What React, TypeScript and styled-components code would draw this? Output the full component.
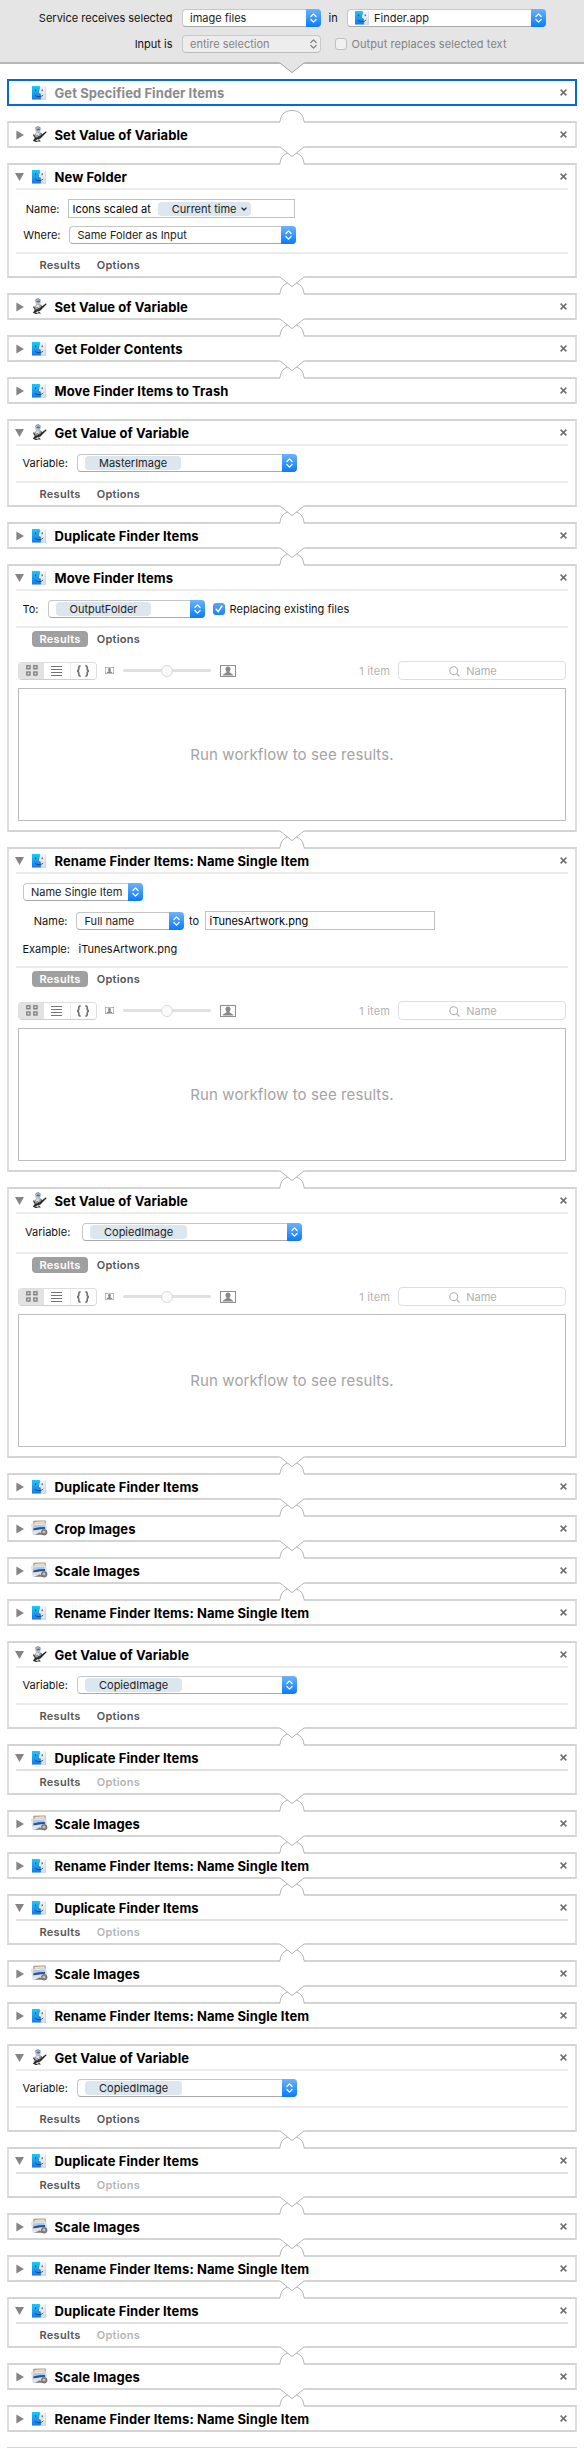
import React from 'react';
import styled, { createGlobalStyle } from 'styled-components';

const GlobalStyle = createGlobalStyle`
  * { box-sizing: border-box; }
  body {
    margin: 0;
    background: #fff;
    font-family: Inter, 'Liberation Sans', sans-serif;
    font-size: 11px;
    line-height: 14px;
    color: #111;
  }
  svg { display: block; flex: none; }
`;

/* ---------- page ---------- */

const Page = styled.main`
  width: 584px;
  height: 2448px;
  overflow: hidden;
  background: #fff;
  white-space: nowrap;
`;

const ServiceBar = styled.header`
  height: 64px;
  padding-top: 9px;
  display: flex;
  flex-direction: column;
  gap: 8px;
  background: #e5e5e5;
  border-bottom: 2px solid #b6b6b6;
`;

const ServiceRow = styled.div`
  display: flex;
  align-items: center;
  height: 18px;
`;

const ServiceLabel = styled.span`
  width: 172.5px;
  margin-right: 9px;
  text-align: right;
`;

const InLabel = styled.span`
  width: 26px;
  padding-left: 8px;
`;

const Workflow = styled.section`
  display: flex;
  flex-direction: column;
  padding: 0 7px;
`;

/* ---------- controls ---------- */

const Popup = styled.div<{ $width: number; $disabled?: boolean; $pill?: boolean }>`
  display: flex;
  align-items: center;
  width: ${(p) => p.$width}px;
  height: 18px;
  padding-left: ${(p) => (p.$pill ? 7 : 7.5)}px;
  border: 1px solid ${(p) => (p.$disabled ? '#c9c9c9' : '#c6c6c6')};
  border-bottom-color: ${(p) => (p.$disabled ? '#bdbdbd' : '#a9a9a9')};
  border-radius: 4px;
  background: ${(p) => (p.$disabled ? '#ededed' : '#fff')};
  color: ${(p) => (p.$disabled ? '#848484' : '#222')};
`;

const Stepper = styled.span<{ $disabled?: boolean }>`
  display: flex;
  align-items: center;
  justify-content: center;
  width: 15px;
  height: 18px;
  margin: -1px -1px -1px auto;
  border-radius: 0 4px 4px 0;
  color: ${(p) => (p.$disabled ? '#7d7d7d' : '#fff')};
  background: ${(p) => (p.$disabled ? 'none' : 'linear-gradient(#6cb3fa, #0a7aff)')};
`;

const PopupIcon = styled.span`
  margin-right: 5px;
`;

const Pill = styled.span<{ $arrow?: boolean }>`
  display: inline-flex;
  align-items: center;
  gap: 4px;
  height: 14px;
  padding: 0 ${(p) => (p.$arrow ? 4 : 14)}px 0 14px;
  border-radius: 4px;
  background: #dce6ef;
  color: #222;
`;

const Field = styled.div<{ $width: number }>`
  display: flex;
  align-items: center;
  gap: 7px;
  width: ${(p) => p.$width}px;
  height: 19px;
  padding-left: 3.5px;
  border: 1px solid #c2c2c2;
  background: #fff;
  color: #000;
`;

const Checkbox = styled.span<{ $checked?: boolean }>`
  display: flex;
  align-items: center;
  justify-content: center;
  width: 12px;
  height: 12px;
  margin-right: 5px;
  border-radius: 3px;
  border: ${(p) => (p.$checked ? '0' : '1px solid #c0c0c0')};
  background: ${(p) => (p.$checked ? 'linear-gradient(#56a7f9, #1f80fb)' : '#f0f0f0')};
`;

const CheckGroup = styled.span<{ $offset: number; $muted?: boolean }>`
  display: flex;
  align-items: center;
  margin-left: ${(p) => p.$offset}px;
  letter-spacing: ${(p) => (p.$muted ? 0.08 : 0.03)}px;
  color: ${(p) => (p.$muted ? '#828282' : 'inherit')};
`;

/* ---------- action card ---------- */

const Card = styled.article<{ $selected?: boolean }>`
  flex: none;
  min-height: 27px;
  border: 2px solid ${(p) => (p.$selected ? '#0669d9' : '#d4d4d4')};
  border-left-color: ${(p) => (p.$selected ? '#0669d9' : '#dedede')};
  border-right-color: ${(p) => (p.$selected ? '#0669d9' : '#dedede')};
  background: #fff;
`;

const CardHeader = styled.div`
  display: flex;
  align-items: center;
  height: 23px;
  padding: 0 8px 0 5.5px;
`;

const DisclosureSlot = styled.span`
  display: flex;
  justify-content: center;
  width: 10px;
  margin-right: 5.5px;
`;

const IconSlot = styled.span`
  display: flex;
  align-items: flex-end;
  justify-content: center;
  width: 18px;
  height: 16px;
  margin: 0 6px 1px 0;
`;

const Title = styled.h2<{ $dim?: boolean }>`
  flex: 1;
  margin: 0;
  padding-top: 1px;
  padding-left: 0.5px;
  font-size: 13px;
  font-weight: 700;
  line-height: 16px;
  letter-spacing: 0.08px;
  color: ${(p) => (p.$dim ? '#8b8b8b' : '#000')};
`;

const Separator = styled.div<{ $dark?: boolean }>`
  height: 2px;
  margin: 0 7px;
  background: ${(p) => (p.$dark ? '#e1e1e1' : '#ebebeb')};
`;

const Body = styled.div<{ $height: number; $left?: number; $top?: number; $gap?: number }>`
  display: flex;
  flex-direction: column;
  gap: ${(p) => p.$gap ?? 8}px;
  height: ${(p) => p.$height}px;
  padding: ${(p) => p.$top ?? 8}px 0 0 ${(p) => p.$left ?? 13.5}px;
`;

const BodyRow = styled.div`
  display: flex;
  align-items: center;
  height: 19px;
`;

const Label = styled.span<{ $width: number; $right?: boolean }>`
  width: ${(p) => p.$width}px;
  padding-right: ${(p) => (p.$right ? 8.5 : 0)}px;
  text-align: ${(p) => (p.$right ? 'right' : 'left')};
`;

const ToLabel = styled.span`
  width: 21px;
  padding-left: 5px;
`;

const Tabs = styled.div`
  display: flex;
  align-items: center;
  gap: 1px;
  height: 22px;
  padding-left: 23px;
`;

const Tab = styled.span<{ $active?: boolean; $disabled?: boolean }>`
  height: 16px;
  padding: 1px 7.5px;
  border-radius: 4px;
  font-weight: 600;
  letter-spacing: 0.28px;
  background: ${(p) => (p.$active ? '#a0a0a0' : 'transparent')};
  color: ${(p) => (p.$active ? '#fff' : p.$disabled ? '#b5b5b5' : '#555')};
`;

/* ---------- results panel ---------- */

const ResultsPanel = styled.div`
  display: flex;
  flex-direction: column;
  gap: 8px;
  padding: 11px 9px 9px;
`;

const Toolbar = styled.div`
  display: flex;
  align-items: center;
  height: 19px;
`;

const Segments = styled.div`
  display: flex;
  width: 79px;
  height: 18px;
  margin-right: 8px;
  border: 1px solid #dedede;
  border-bottom-color: #cfcfcf;
  border-radius: 4px;
  overflow: hidden;
`;

const Segment = styled.span<{ $on?: boolean }>`
  display: flex;
  flex: 1;
  align-items: center;
  justify-content: center;
  background: ${(p) => (p.$on ? '#e2e2e2' : '#fff')};
  color: #747474;
  & + & + & { border-left: 1px solid #ebebeb; }
`;

const Slider = styled.span`
  display: flex;
  align-items: center;
  justify-content: center;
  width: 88px;
  height: 3px;
  margin: 0 9px;
  border-radius: 2px;
  background: #e0e0e0;
`;

const Knob = styled.span`
  flex: none;
  width: 12px;
  height: 12px;
  border: 1px solid #d9d9d9;
  border-radius: 50%;
  background: #fafafa;
`;

const ItemCount = styled.span`
  margin-left: auto;
  margin-right: 8px;
  letter-spacing: 0.15px;
  color: #b4b4b4;
`;

const SearchField = styled.div`
  display: flex;
  align-items: center;
  justify-content: center;
  gap: 6px;
  width: 168px;
  height: 19px;
  padding: 1px 18px 0 0;
  border: 1px solid #dedede;
  border-radius: 4px;
  color: #b0b0b0;
`;

const ResultsBox = styled.div`
  display: flex;
  align-items: center;
  justify-content: center;
  height: 133px;
  border: 1px solid #bcbcbc;
  font-size: 15px;
  letter-spacing: 0.1px;
  color: #a4a4a4;
`;

/* ---------- connectors ---------- */

const Gap = styled.div`
  position: relative;
  z-index: 1;
  display: flex;
  flex: none;
  justify-content: center;
  height: 15px;
  & > svg { margin-top: -2px; }
`;

type LinkKind = 'header' | 'arc' | 'link' | 'none';

function Connector({ kind }: { kind: LinkKind }) {
  if (kind === 'none') return <Gap />;
  const fill = kind === 'header' ? '#e5e5e5' : '#fff';
  return (
    <Gap>
      <svg width="28" height="19" viewBox="0 0 28 19" fill="none" stroke="#b2b2b2">
        {kind !== 'header' && (
          <>
            <path d="M2.3 19V15.5C3 10 8 6.5 14 6.5S25 10 25.7 15.5V19Z" fill="#fff" stroke="none" />
            <path d="M1.5 17.6Q2.4 17.4 2.4 15.5C3 10 8 6.5 14 6.5S25 10 25.6 15.5Q25.6 17.4 26.5 17.6" />
          </>
        )}
        {kind !== 'arc' && (
          <>
            <path d="M1.5 0H26.5V1L14 10.6L1.5 1Z" fill={fill} stroke="none" />
            <path d="M1.8 .8L14 10.6L26.2 .8" stroke={kind === 'header' ? '#9f9f9f' : '#b2b2b2'} />
          </>
        )}
      </svg>
    </Gap>
  );
}

/* ---------- icons ---------- */

const FinderIcon = () => (
  <svg width="14" height="14" viewBox="0 0 14 14">
    <defs>
      <linearGradient id="finderBlue" x1="0" y1="0" x2="0" y2="1">
        <stop offset="0" stopColor="#17cbfb" />
        <stop offset="1" stopColor="#1b74ee" />
      </linearGradient>
      <linearGradient id="finderPale" x1="0" y1="0" x2="0" y2="1">
        <stop offset="0" stopColor="#f4f6f8" />
        <stop offset="1" stopColor="#d0deee" />
      </linearGradient>
    </defs>
    <rect width="14" height="13.6" rx=".8" fill="url(#finderPale)" />
    <path d="M0 0H8C6.9 3 6.5 5.200 6.400 7.700H8.300C8.200 9.800 8.400 11.700 8.900 13.600H0Z" fill="url(#finderBlue)" />
    <path d="M3.600 3.400V5.200M10.200 3.400V5.200" stroke="#12406b" strokeWidth="1" />
    <path d="M7.900 1.200C6.800 3.600 6.500 5.600 6.400 7.700H8.300C8.200 9.600 8.400 11.200 8.800 12.800" stroke="#25557f" strokeWidth=".6" fill="none" />
    <path d="M2.800 9C5.200 11.200 8.800 11.200 11.200 9" stroke="#12406b" strokeWidth=".85" fill="none" />
    <path d="M9 13.600H13.800V.4" stroke="#b9c2cb" strokeWidth=".5" fill="none" />
  </svg>
);

const AutomatorIcon = () => (
  <svg width="15" height="16" viewBox="0 0 15 16">
    <path d="M2.500 8.500L5 5.500L9 6.500L9.500 9L7.500 13L3 12.500L1.500 10Z" fill="#a3a3a5" />
    <path d="M4.600 6.500L7.600 7.200L6.500 9.800L4 9Z" fill="#e3e4e7" />
    <circle cx="6" cy="3.400" r="2.900" fill="#c5c7cb" />
    <path d="M3.300 2.600A2.900 2.900 0 0 1 8.600 2.400" stroke="#6c6f76" strokeWidth=".8" fill="none" />
    <rect x="4.400" y="2.600" width="3.700" height="2" rx="1" fill="#3b79ae" />
    <path d="M.9 14.800L3 11.800L6.500 11L14 5.200L14.600 6.300L8.500 12.400L5 13.400L2.500 15.500Z" fill="#2b2629" />
    <path d="M1.400 8.600L3.300 11.500M9 7.500L10.800 9.600M3 15.400H5.500M6.500 13.500L7.800 15H5.800" stroke="#39363b" strokeWidth="1.100" fill="none" />
    <path d="M5.500 9.500L7.500 11.500" stroke="#544f54" strokeWidth="1" />
  </svg>
);

const ImagesIcon = () => (
  <svg width="17" height="16" viewBox="0 0 17 16">
    <path d="M2.500 .8L14.500 .4L15.200 8L2 9Z" fill="#a98c64" />
    <path d="M3.600 1.700L13.600 1.300L14 5L3.200 5Z" fill="#e9e2d3" />
    <path d="M.6 4.300L14.600 3.300L15.800 12.900L2.100 14.700Z" fill="#f2f3f5" stroke="#b9bcc0" strokeWidth=".5" />
    <path d="M1.800 5.300L13.700 4.400L14.500 11.400L2.800 12.800Z" fill="#a9cbee" />
    <path d="M2.200 8.600L8 7.200L14 7L14.300 8.800L8 9.400L2.500 10.400Z" fill="#2c4d92" />
    <path d="M2.500 10.600L14.300 9.200L14.500 11.500L2.800 12.900Z" fill="#e0e0dc" />
    <path d="M3.500 14.700L9 12.200L12 14.800Z" fill="#77797d" />
    <circle cx="13.200" cy="12.300" r="2.800" fill="#8c8983" stroke="#5f5d5a" strokeWidth=".7" />
    <circle cx="12.900" cy="11.900" r="1.200" fill="#c8c7c2" />
  </svg>
);

const icons = { finder: FinderIcon, automator: AutomatorIcon, images: ImagesIcon };

const Disclosure = ({ open }: { open: boolean }) =>
  open ? (
    <svg width="9" height="8" viewBox="0 0 9 8"><path d="M0 0H9L4.500 8Z" fill="#858585" /></svg>
  ) : (
    <svg width="8" height="10" viewBox="0 0 8 10"><path d="M.4 .4V9.600L8 5Z" fill="#858585" /></svg>
  );

const CloseIcon = () => (
  <svg width="7" height="7" viewBox="0 0 7 7"><path d="M.6 .6L6.400 6.400M6.400 .6L.6 6.400" stroke="#707070" strokeWidth="1.500" /></svg>
);

const UpDown = () => (
  <svg width="7" height="10" viewBox="0 0 7 10" fill="none" stroke="currentColor" strokeWidth="1.200" strokeLinecap="round" strokeLinejoin="round">
    <path d="M.9 3.500L3.500 .9L6.100 3.500M.9 6.500L3.500 9.100L6.100 6.500" />
  </svg>
);

const Check = () => (
  <svg width="8" height="8" viewBox="0 0 8 8" fill="none" stroke="#fff" strokeWidth="1.600" strokeLinecap="round" strokeLinejoin="round">
    <path d="M1.200 4.300L3.200 6.600L6.800 1.200" />
  </svg>
);

const DownChevron = () => (
  <svg width="6" height="4" viewBox="0 0 6 4" fill="none" stroke="#222" strokeWidth="1.300"><path d="M.5 .6L3 3L5.500 .6" /></svg>
);

const GridIcon = () => (
  <svg width="12" height="11" viewBox="0 0 12 11" fill="none" stroke="currentColor" strokeWidth="1.200">
    <rect x=".8" y=".8" width="3.200" height="3" /><rect x="7.800" y=".8" width="3.200" height="3" />
    <rect x=".8" y="7" width="3.200" height="3" /><rect x="7.800" y="7" width="3.200" height="3" />
  </svg>
);

const ListIcon = () => (
  <svg width="11" height="10" viewBox="0 0 11 10" stroke="currentColor" strokeWidth="1"><path d="M0 .5H11M0 3.500H11M0 6.500H11M0 9.500H11" /></svg>
);

const BracesIcon = () => (
  <svg width="14" height="12" viewBox="0 0 13 11" fill="none" stroke="currentColor" strokeWidth="1.600">
    <path d="M4.300 .8C2.600 .8 2.600 1.400 2.600 3C2.600 4.600 2.400 5.300 1 5.500C2.400 5.700 2.600 6.400 2.600 8C2.600 9.600 2.600 10.200 4.300 10.200" />
    <path d="M8.700 .8C10.400 .8 10.400 1.400 10.400 3C10.400 4.600 10.600 5.300 12 5.500C10.600 5.700 10.400 6.400 10.400 8C10.400 9.600 10.400 10.200 8.700 10.200" />
  </svg>
);

const PersonIcon = ({ width, height }: { width: number; height: number }) => (
  <svg width={width} height={height} viewBox="0 0 16 12" preserveAspectRatio="none">
    <rect x=".5" y=".5" width="15" height="11" fill="#fff" stroke="#8f8f8f" />
    <path d="M8 1.600C10 1.600 10.700 3 10.500 4.600C10.400 5.700 9.700 6.300 9.500 6.900C9.500 8 13 8.300 13.300 10.400H2.700C3 8.300 6.500 8 6.500 6.900C6.300 6.300 5.600 5.700 5.500 4.600C5.300 3 6 1.600 8 1.600Z" fill="#8a8a8a" />
  </svg>
);

const SearchIcon = () => (
  <svg width="11" height="11" viewBox="0 0 11 11" fill="none" stroke="currentColor" strokeWidth="1.100">
    <circle cx="4.700" cy="4.700" r="3.900" /><path d="M7.500 7.500L10.500 10.500" />
  </svg>
);

/* ---------- composed parts ---------- */

function Select({ width, text, pill, icon, disabled }: { width: number; text: string; pill?: boolean; icon?: boolean; disabled?: boolean }) {
  return (
    <Popup $width={width} $disabled={disabled} $pill={pill}>
      {icon && <PopupIcon><FinderIcon /></PopupIcon>}
      {pill ? <Pill>{text}</Pill> : text}
      <Stepper $disabled={disabled}><UpDown /></Stepper>
    </Popup>
  );
}

function Results() {
  return (
    <ResultsPanel>
      <Toolbar>
        <Segments>
          <Segment $on><GridIcon /></Segment>
          <Segment><ListIcon /></Segment>
          <Segment><BracesIcon /></Segment>
        </Segments>
        <PersonIcon width={9} height={7} />
        <Slider><Knob /></Slider>
        <PersonIcon width={16} height={12} />
        <ItemCount>1 item</ItemCount>
        <SearchField><SearchIcon />Name</SearchField>
      </Toolbar>
      <ResultsBox>Run workflow to see results.</ResultsBox>
    </ResultsPanel>
  );
}

function VariableBody({ name }: { name: string }) {
  return (
    <Body $height={35} $top={7.5}>
      <BodyRow><Label $width={54.5}>Variable:</Label><Select pill width={220} text={name} /></BodyRow>
    </Body>
  );
}

type Action = {
  title: string;
  icon: keyof typeof icons;
  after?: LinkKind;
  open?: boolean;
  selected?: boolean;
  body?: React.ReactNode;
  results?: boolean;
};

function ActionCard({ title, icon, open, selected, body, results }: Action) {
  const Icon = icons[icon];
  return (
    <Card $selected={selected}>
      <CardHeader>
        <DisclosureSlot>{!selected && <Disclosure open={!!open} />}</DisclosureSlot>
        <IconSlot><Icon /></IconSlot>
        <Title $dim={selected}>{title}</Title>
        <CloseIcon />
      </CardHeader>
      {open && (
        <>
          <Separator $dark={!body} />
          {body}
          {body && <Separator />}
          <Tabs>
            <Tab $active={results}>Results</Tab>
            <Tab $disabled={!body}>Options</Tab>
          </Tabs>
          {results && <Results />}
        </>
      )}
    </Card>
  );
}

const newFolderBody = (
  <Body $height={62} $top={9} $gap={7.5}>
    <BodyRow>
      <Label $width={45.5} $right>Name:</Label>
      <Field $width={227}>Icons scaled at<Pill $arrow>Current time<DownChevron /></Pill></Field>
    </BodyRow>
    <BodyRow>
      <Label $width={46.5} $right>Where:</Label>
      <Select width={227} text="Same Folder as Input" />
    </BodyRow>
  </Body>
);

const moveBody = (
  <Body $height={35} $top={8.5}>
    <BodyRow>
      <Label $width={25}>To:</Label>
      <Select pill width={157} text="OutputFolder" />
      <CheckGroup $offset={8}><Checkbox $checked><Check /></Checkbox>Replacing existing files</CheckGroup>
    </BodyRow>
  </Body>
);

const renameBody = (
  <Body $height={92} $gap={9.5} $top={8.5}>
    <BodyRow><Select width={120} text="Name Single Item" /></BodyRow>
    <BodyRow>
      <Label $width={53.5} $right>Name:</Label>
      <Select width={108} text="Full name" />
      <ToLabel>to</ToLabel>
      <Field $width={230}>iTunesArtwork.png</Field>
    </BodyRow>
    <BodyRow><Label $width={56}>Example:</Label>iTunesArtwork.png</BodyRow>
  </Body>
);

const setValueBody = (
  <Body $height={38} $left={16} $top={8.5}>
    <BodyRow><Label $width={57}>Variable:</Label><Select pill width={220} text="CopiedImage" /></BodyRow>
  </Body>
);

const duplicate: Action = { title: 'Duplicate Finder Items', icon: 'finder' };
const scale: Action = { title: 'Scale Images', icon: 'images' };
const rename: Action = { title: 'Rename Finder Items: Name Single Item', icon: 'finder' };
const getCopied: Action = { title: 'Get Value of Variable', icon: 'automator', open: true, body: <VariableBody name="CopiedImage" /> };

const actions: Action[] = [
  { title: 'Get Specified Finder Items', icon: 'finder', selected: true, after: 'arc' },
  { title: 'Set Value of Variable', icon: 'automator' },
  { title: 'New Folder', icon: 'finder', open: true, body: newFolderBody },
  { title: 'Set Value of Variable', icon: 'automator' },
  { title: 'Get Folder Contents', icon: 'finder' },
  { title: 'Move Finder Items to Trash', icon: 'finder', after: 'none' },
  { title: 'Get Value of Variable', icon: 'automator', open: true, body: <VariableBody name="MasterImage" /> },
  duplicate,
  { title: 'Move Finder Items', icon: 'finder', open: true, body: moveBody, results: true },
  { ...rename, open: true, body: renameBody, results: true },
  { title: 'Set Value of Variable', icon: 'automator', open: true, body: setValueBody, results: true },
  duplicate,
  { title: 'Crop Images', icon: 'images' },
  scale,
  { ...rename, after: 'none' },
  getCopied,
  { ...duplicate, open: true },
  scale,
  rename,
  { ...duplicate, open: true },
  scale,
  { ...rename, after: 'none' },
  getCopied,
  { ...duplicate, open: true },
  scale,
  rename,
  { ...duplicate, open: true },
  scale,
  { ...rename, after: 'none' },
];

export default function App() {
  return (
    <Page>
      <GlobalStyle />
      <ServiceBar>
        <ServiceRow>
          <ServiceLabel>Service receives selected</ServiceLabel>
          <Select width={139} text="image files" />
          <InLabel>in</InLabel>
          <Select width={199.5} text="Finder.app" icon />
        </ServiceRow>
        <ServiceRow>
          <ServiceLabel>Input is</ServiceLabel>
          <Select width={139} text="entire selection" disabled />
          <CheckGroup $offset={14} $muted><Checkbox />Output replaces selected text</CheckGroup>
        </ServiceRow>
      </ServiceBar>
      <Workflow>
        <Connector kind="header" />
        {actions.map((action, i) => (
          <React.Fragment key={i}>
            <ActionCard {...action} />
            <Connector kind={action.after ?? 'link'} />
          </React.Fragment>
        ))}
        <Card />
      </Workflow>
    </Page>
  );
}
